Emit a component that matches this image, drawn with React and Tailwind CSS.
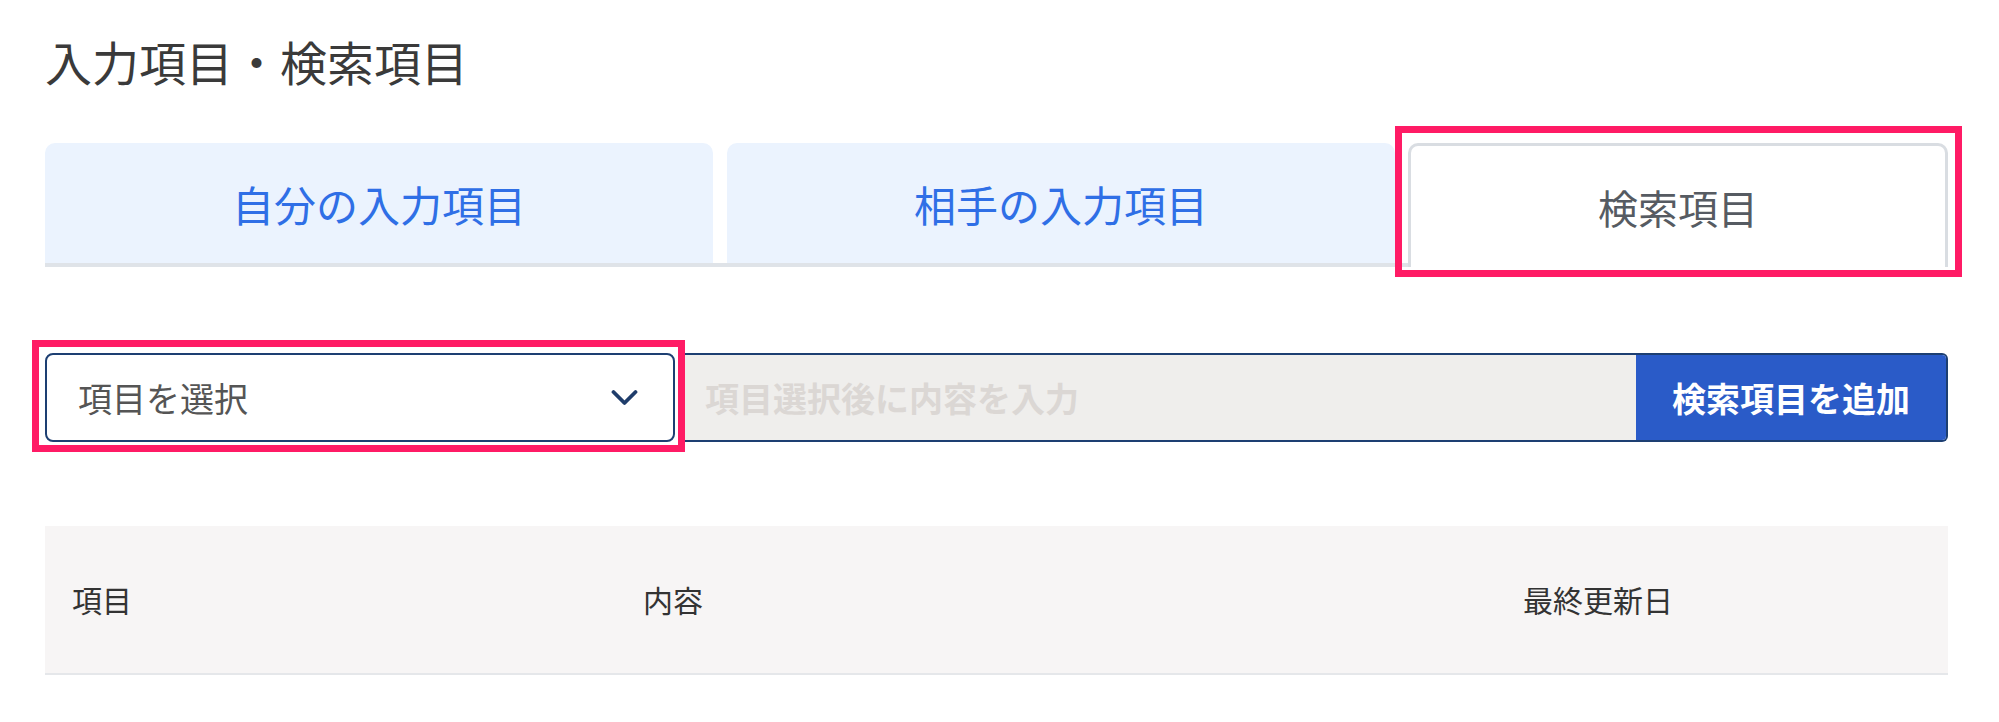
import React from "react";

const JP = { fontFamily: '"Noto Sans CJK JP", "Noto Sans", sans-serif' };

export default function App() {
  return (
    <div
      className="relative w-[1999px] h-[722px] bg-white pl-[45px] pr-[51px] pt-[31px]"
      style={JP}
    >
      <h1 className="text-[47px] leading-[60px] text-[#3a3a3a] font-normal">
        入力項目・検索項目
      </h1>

      <div className="mt-[52px] flex">
        <div className="flex gap-[14px] pr-[13px] border-b-[4px] border-[#dfe3e8]">
          <button className="w-[668px] h-[120px] rounded-t-[10px] bg-[#ebf3fe] text-[42px] font-normal text-[#2f6fe6] flex items-center justify-center">
            自分の入力項目
          </button>
          <button className="w-[668px] h-[120px] rounded-t-[10px] bg-[#ebf3fe] text-[42px] font-normal text-[#2f6fe6] flex items-center justify-center">
            相手の入力項目
          </button>
        </div>
        <button className="flex-1 h-[124px] rounded-t-[10px] bg-white border-[3px] border-b-0 border-[#d9dde2] text-[40px] text-[#565b62] flex items-center justify-center">
          検索項目
        </button>
      </div>

      <div className="mt-[86px] flex h-[89px]">
        <div className="w-[630px] h-full border-2 border-[#1d3f72] rounded-[8px] bg-white flex items-center justify-between pl-[31px] pr-[35px]">
          <span className="text-[34px] text-[#555555]">項目を選択</span>
          <svg width="27" height="17" viewBox="0 0 27 17" fill="none">
            <polyline
              points="2.5,3 13.5,14 24.5,3"
              stroke="#1f3d6b"
              strokeWidth="3.8"
              strokeLinecap="round"
              strokeLinejoin="round"
            />
          </svg>
        </div>
        <div className="ml-[10px] flex-1 flex h-full border-y-2 border-r-2 border-[#1d3f72] rounded-r-[6px] overflow-hidden">
          <input
            className="flex-1 h-full bg-[#efeeec] pl-[20px] text-[34px] font-bold outline-none placeholder:text-[#dbd7d4]"
            placeholder="項目選択後に内容を入力"
            style={JP}
          />
          <button className="w-[310px] h-full bg-[#2a5bc8] text-white text-[34px] font-bold flex items-center justify-center">
            検索項目を追加
          </button>
        </div>
      </div>

      <div className="mt-[84px] grid grid-cols-[571px_880px_1fr] items-center h-[149px] pl-[27px] bg-[#f7f5f5] border-b-2 border-[#e5e7ea] text-[30px] font-normal text-[#333333]">
        <div>項目</div>
        <div>内容</div>
        <div>最終更新日</div>
      </div>

      <div className="absolute left-[32px] top-[340px] w-[653px] h-[112px] border-[7px] border-[#ff1b65] pointer-events-none" />
      <div className="absolute left-[1395px] top-[126px] w-[567px] h-[151px] border-[7px] border-[#ff1b65] pointer-events-none" />
    </div>
  );
}
